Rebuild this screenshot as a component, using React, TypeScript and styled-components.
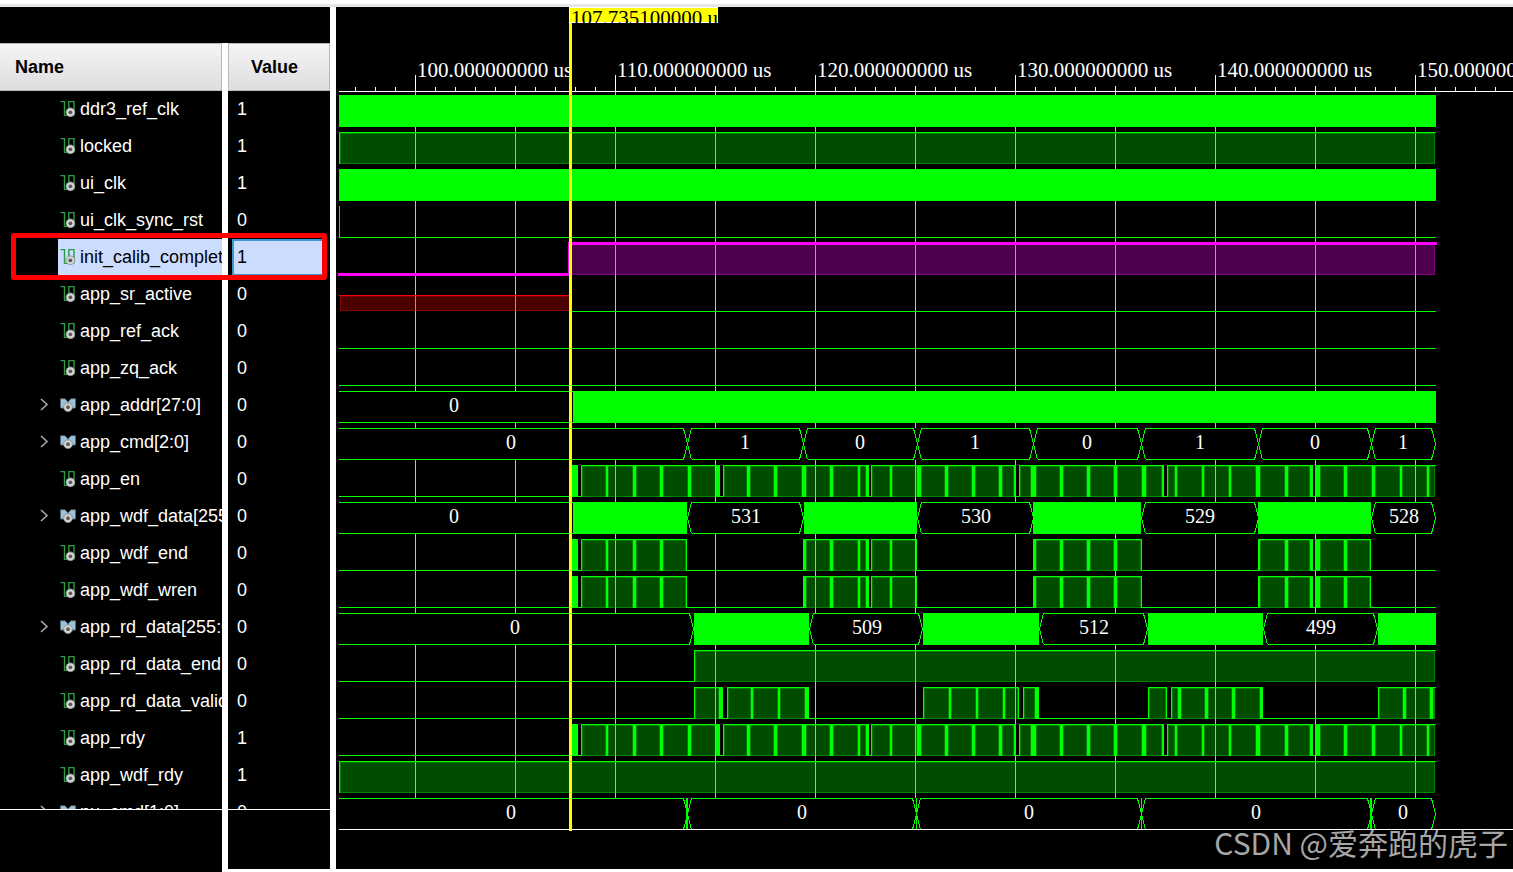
import React from "react";
import styled, { createGlobalStyle } from "styled-components";

const GlobalStyle = createGlobalStyle`
  * { box-sizing: border-box; }
  body { margin: 0; background: #fff; font-family: "Liberation Sans", Arial, sans-serif; }
`;

const GREEN = "#00ff00";
const LEFT = 3;
const END = 1100;

type Span = [number, number];
type Burst = { span: Span; marks: Span[] };
type Segment = { span: Span; label?: string; at?: number; solid?: boolean };
type Wave =
  | { kind: "solid" }
  | { kind: "level"; rise: number; edge?: boolean }
  | { kind: "low"; from?: number; edge?: boolean }
  | { kind: "selected" }
  | { kind: "unknown" }
  | { kind: "bursts"; bursts: Burst[] }
  | { kind: "bus"; segments: Segment[]; dense?: Span[] };

type Signal = { name: string; value: string; bus?: boolean; selected?: boolean; wave: Wave };

const readyBursts: Burst[] = [
  { span: [236, 242], marks: [[236, 242]] },
  { span: [245, 384], marks: [[270, 272], [297, 300], [324, 327], [352, 355], [380, 384]] },
  { span: [387, 533], marks: [[411, 414], [438, 441], [466, 470], [494, 497], [522, 524], [530, 533]] },
  { span: [535, 680], marks: [[554, 556], [581, 585], [609, 612], [636, 639], [663, 666], [678, 680]] },
  { span: [683, 828], marks: [[695, 700], [724, 727], [751, 754], [778, 781], [806, 810], [826, 828]] },
  { span: [831, 977], marks: [[839, 841], [866, 868], [893, 895], [920, 924], [949, 952], [974, 977]] },
  { span: [979, 1100], marks: [[979, 984], [1008, 1011], [1036, 1039], [1064, 1066], [1091, 1093]] },
];

const writeBursts: Burst[] = [
  { span: [236, 242], marks: [[236, 242]] },
  { span: [245, 351], marks: [[270, 272], [297, 300], [324, 327], [350, 351]] },
  { span: [467, 533], marks: [[467, 470], [494, 497], [522, 524], [530, 533]] },
  { span: [535, 581], marks: [[554, 556], [580, 581]] },
  { span: [697, 806], marks: [[697, 700], [724, 727], [751, 754], [778, 781], [805, 806]] },
  { span: [922, 977], marks: [[922, 924], [949, 952], [974, 977]] },
  { span: [979, 1035], marks: [[979, 984], [1008, 1011], [1034, 1035]] },
];

const validBursts: Burst[] = [
  { span: [358, 387], marks: [[383, 387]] },
  { span: [391, 473], marks: [[415, 417], [442, 444], [469, 473]] },
  { span: [587, 683], marks: [[613, 615], [640, 642], [667, 669], [682, 683]] },
  { span: [687, 703], marks: [[699, 703]] },
  { span: [812, 831], marks: [[830, 831]] },
  { span: [835, 927], marks: [[842, 845], [869, 872], [896, 899], [924, 927]] },
  { span: [1042, 1100], marks: [[1067, 1070], [1094, 1097]] },
];

const signals: Signal[] = [
  { name: "ddr3_ref_clk", value: "1", wave: { kind: "solid" } },
  { name: "locked", value: "1", wave: { kind: "level", rise: LEFT } },
  { name: "ui_clk", value: "1", wave: { kind: "solid" } },
  { name: "ui_clk_sync_rst", value: "0", wave: { kind: "low", edge: true } },
  { name: "init_calib_complete", value: "1", selected: true, wave: { kind: "selected" } },
  { name: "app_sr_active", value: "0", wave: { kind: "unknown" } },
  { name: "app_ref_ack", value: "0", wave: { kind: "low" } },
  { name: "app_zq_ack", value: "0", wave: { kind: "low" } },
  {
    name: "app_addr[27:0]", value: "0", bus: true,
    wave: { kind: "bus", segments: [{ span: [LEFT, 237], label: "0", at: 118 }, { span: [237, END], solid: true }] },
  },
  {
    name: "app_cmd[2:0]", value: "0", bus: true,
    wave: {
      kind: "bus",
      segments: [
        { span: [LEFT, 351], label: "0", at: 175 },
        { span: [351, 467], label: "1", at: 409 },
        { span: [467, 581], label: "0", at: 524 },
        { span: [581, 697], label: "1", at: 639 },
        { span: [697, 805], label: "0", at: 751 },
        { span: [805, 922], label: "1", at: 864 },
        { span: [922, 1035], label: "0", at: 979 },
        { span: [1035, 1099], label: "1", at: 1067 },
      ],
    },
  },
  { name: "app_en", value: "0", wave: { kind: "bursts", bursts: readyBursts } },
  {
    name: "app_wdf_data[255:0]", value: "0", bus: true,
    wave: {
      kind: "bus",
      segments: [
        { span: [LEFT, 237], label: "0", at: 118 },
        { span: [237, 351], solid: true },
        { span: [351, 467], label: "531", at: 410 },
        { span: [468, 581], solid: true },
        { span: [581, 697], label: "530", at: 640 },
        { span: [697, 805], solid: true },
        { span: [805, 922], label: "529", at: 864 },
        { span: [922, 1035], solid: true },
        { span: [1035, 1099], label: "528", at: 1068 },
      ],
    },
  },
  { name: "app_wdf_end", value: "0", wave: { kind: "bursts", bursts: writeBursts } },
  { name: "app_wdf_wren", value: "0", wave: { kind: "bursts", bursts: writeBursts } },
  {
    name: "app_rd_data[255:0]", value: "0", bus: true,
    wave: {
      kind: "bus",
      segments: [
        { span: [LEFT, 357], label: "0", at: 179 },
        { span: [358, 473], solid: true },
        { span: [473, 586], label: "509", at: 531 },
        { span: [587, 703], solid: true },
        { span: [703, 811], label: "512", at: 758 },
        { span: [812, 927], solid: true },
        { span: [927, 1041], label: "499", at: 985 },
        { span: [1042, END], solid: true },
      ],
    },
  },
  { name: "app_rd_data_end", value: "0", wave: { kind: "level", rise: 358 } },
  { name: "app_rd_data_valid", value: "0", wave: { kind: "bursts", bursts: validBursts } },
  { name: "app_rdy", value: "1", wave: { kind: "bursts", bursts: readyBursts } },
  { name: "app_wdf_rdy", value: "1", wave: { kind: "level", rise: LEFT } },
  {
    name: "pu_cmd[1:0]", value: "0", bus: true,
    wave: {
      kind: "bus",
      dense: [[350, 352], [580, 581], [805, 806], [1034, 1036]],
      segments: [
        { span: [LEFT, 351], label: "0", at: 175 },
        { span: [351, 580], label: "0", at: 466 },
        { span: [580, 805], label: "0", at: 693 },
        { span: [805, 1035], label: "0", at: 920 },
        { span: [1035, 1099], label: "0", at: 1067 },
      ],
    },
  },
];

const Page = styled.div`
  position: relative;
  display: flex;
  flex-direction: column;
  height: 100vh;
  overflow: hidden;
  background: #fff;
`;

const TopEdge = styled.div`
  flex: none;
  height: 7px;
  border-bottom: 3px solid #e6e6e6;
`;

const Workspace = styled.main`
  flex: 1;
  min-height: 0;
  display: flex;
  gap: 6px;
`;

const SignalPane = styled.section`
  position: relative;
  flex: none;
  width: 330px;
  display: flex;
  flex-direction: column;
  padding-top: 36px;
  background: #000;
`;

const SignalViewport = styled.div`
  flex: 1;
  min-height: 0;
  overflow: hidden;
`;

const SignalTable = styled.table`
  width: 100%;
  table-layout: fixed;
  border-collapse: separate;
  border-spacing: 0;
  color: #fff;
  font-size: 18px;
  line-height: 20px;
`;

const HeadCell = styled.th<{ $value?: boolean }>`
  height: 48px;
  padding: 0;
  width: ${(p) => (p.$value ? "108px" : "auto")};
  border-left: ${(p) => (p.$value ? "6px solid #fff" : "0")};
  text-align: left;
  color: #000;
`;

const HeadLabel = styled.div<{ $value?: boolean }>`
  height: 48px;
  display: flex;
  align-items: center;
  padding-left: ${(p) => (p.$value ? "22px" : "15px")};
  border: 1px solid #b9b9bb;
  border-left-width: ${(p) => (p.$value ? "1px" : "0")};
  background: linear-gradient(#f5f5f5, #dedee0);
`;

const Cell = styled.td<{ $value?: boolean }>`
  height: 37px;
  padding: 0;
  border-left: ${(p) => (p.$value ? "6px solid #fff" : "0")};
`;

const NameLine = styled.div`
  display: flex;
  height: 37px;
  overflow: hidden;
`;

const ToggleSlot = styled.div`
  flex: none;
  width: 58px;
  display: flex;
  align-items: center;
  justify-content: flex-end;
  padding: 0 9px 2px 0;
`;

const Toggle = styled.button`
  display: flex;
  padding: 0;
  border: 0;
  background: none;
  color: #a8a8a8;
`;

const NameLabel = styled.div<{ $selected?: boolean }>`
  flex: 1;
  min-width: 0;
  display: flex;
  align-items: center;
  gap: 4px;
  padding: 0 0 1px 2px;
  overflow: hidden;
  white-space: nowrap;
  color: ${(p) => (p.$selected ? "#000" : "#fff")};
  background: ${(p) => (p.$selected ? "#ccdcff" : "transparent")};
  svg { flex: none; }
`;

const ValueBox = styled.div<{ $selected?: boolean }>`
  display: flex;
  align-items: center;
  height: 37px;
  margin: 0 4px;
  padding: 0 3px 1px;
  border: 2px solid ${(p) => (p.$selected ? "#3c96d4" : "transparent")};
  color: ${(p) => (p.$selected ? "#000" : "#fff")};
  background: ${(p) => (p.$selected ? "#ccdcff" : "transparent")};
`;

const PaneFooter = styled.div`
  flex: none;
  display: flex;
  gap: 6px;
  height: 63px;
  border-top: 1px solid #fff;
  background: #fff;
`;

const FooterName = styled.div`
  flex: 1;
  background: #000;
`;

const FooterValue = styled.div`
  width: 102px;
  margin-bottom: 3px;
  background: #000;
`;

const Highlight = styled.div`
  position: absolute;
  left: 11px;
  right: 3px;
  top: 226px;
  height: 47px;
  border: 5px solid #ff0000;
  border-radius: 3px;
`;

const WavePane = styled.section`
  flex: 1;
  min-width: 0;
  margin-bottom: 3px;
  overflow: hidden;
  background: #000;
`;

const Chart = styled.svg`
  display: block;
  width: 100%;
  height: 100%;
  shape-rendering: crispEdges;
`;

const ChartText = styled.text<{ $time?: boolean }>`
  font-family: "Liberation Serif", "Times New Roman", serif;
  font-size: ${(p) => (p.$time ? "21px" : "20px")};
  white-space: pre;
`;

const Watermark = styled.div`
  position: absolute;
  right: 5px;
  bottom: 8px;
  color: #a6a6a6;
  font-family: "Noto Sans CJK SC", sans-serif;
  font-size: 30px;
  font-weight: 400;
  line-height: 44px;
  white-space: nowrap;
`;

const Knob = ({ cx, cy }: { cx: number; cy: number }) => (
  <>
    <circle cx={cx} cy={cy} r="4.4" fill="#d4d4d4" stroke="#8a8a8a" strokeWidth="0.8" />
    <circle cx={cx} cy={cy} r="1.9" fill="#5a5a5a" />
  </>
);

const WireIcon = () => (
  <svg width="16" height="18" viewBox="0 0 16 18" fill="none" aria-hidden="true">
    <path d="M0.5 1.6H4.5V15.4H8.8V1.6H14V15.4" stroke="#2f9a45" strokeWidth="1.4" />
    <Knob cx={10.4} cy={12.3} />
  </svg>
);

const BusIcon = () => (
  <svg width="16" height="18" viewBox="0 0 16 18" aria-hidden="true">
    <path d="M0.5 2.8H5L8 6L11 2.8H15.5V12H0.5Z" fill="#97c4dc" stroke="#5d6a72" strokeWidth="0.8" />
    <path d="M4.8 12.5V8.5L8 6L11.2 8.5V12.5Z" fill="#46525a" />
    <Knob cx={8} cy={11.2} />
  </svg>
);

const Chevron = () => (
  <svg width="9" height="13" viewBox="0 0 9 13" fill="none" aria-hidden="true">
    <path d="M1 1L7 6.5L1 12" stroke="currentColor" strokeWidth="1.6" />
  </svg>
);

const High = ({ y, from, to, color = GREEN }: { y: number; from: number; to: number; color?: string }) => (
  <g>
    <rect x={from} y={y + 1} width={to - from} height={31} fill={color} fillOpacity={0.3} />
    <path
      d={`M${from + 1.5} ${y + 32}V${y + 1.5}H${to - 0.5}V${y + 31.5}H${from}`}
      fill="none"
      stroke={color}
      strokeOpacity={0.3}
    />
  </g>
);

const BurstShape = ({ y, burst }: { y: number; burst: Burst }) => {
  const [from, to] = burst.span;
  return (
    <g fill={GREEN}>
      <High y={y} from={from} to={to === END ? END - 1 : to} />
      {burst.marks.map(([a, b]) => (
        <g key={a}>
          <rect x={Math.max(a - 1, from)} y={y} width={Math.min(b + 1, to) - Math.max(a - 1, from)} height={32} fillOpacity={0.3} />
          <rect x={a} y={y} width={b - a} height={32} />
        </g>
      ))}
      <rect x={from} y={y} width={1} height={32} />
      <rect x={from} y={y} width={to - from} height={1} />
    </g>
  );
};

const BusSegment = ({ y, segment }: { y: number; segment: Segment }) => {
  const [a, b] = segment.span;
  if (segment.solid) return <rect x={a} y={y} width={b - a} height={32} fill={GREEN} />;
  const top = y + 0.5;
  const mid = y + 16;
  const bottom = y + 31.5;
  const head = a === LEFT ? `M${a} ${top}` : `M${a + 4.5} ${bottom}L${a + 0.5} ${mid}L${a + 4.5} ${top}`;
  const taper = b === 237 ? 0 : 4;
  return (
    <g>
      <rect x={a} y={y} width={b - a} height={32} fill="#000" />
      <path
        d={`${head}H${b - taper + 0.5}L${b + 0.5} ${mid}L${b - taper + 0.5} ${bottom}H${a === LEFT ? a : a + 4.5}`}
        fill="none"
        stroke={GREEN}
      />
      <ChartText x={segment.at} y={y + 21} fill="#fff" textAnchor="middle">
        {segment.label}
      </ChartText>
    </g>
  );
};

const WaveRow = ({ wave, y }: { wave: Wave; y: number }) => {
  switch (wave.kind) {
    case "solid":
      return <rect x={LEFT} y={y} width={END - LEFT} height={32} fill={GREEN} />;
    case "level":
      return (
        <g fill={GREEN}>
          {wave.rise > LEFT && <rect x={LEFT} y={y + 31} width={wave.rise - LEFT} height={1} />}
          <High y={y} from={wave.rise} to={END - 1} />
          <rect x={wave.rise} y={y} width={1} height={32} />
          <rect x={wave.rise} y={y} width={END - wave.rise} height={1} />
        </g>
      );
    case "low":
      return (
        <g fill={GREEN}>
          <rect x={LEFT} y={y + 31} width={END - LEFT} height={1} />
          {wave.edge && <rect x={LEFT} y={y} width={1} height={32} />}
        </g>
      );
    case "selected":
      return (
        <g fill="#ff00ff">
          <High y={y} from={233} to={END - 1} color="#ff00ff" />
          <rect x={2} y={y + 30} width={231} height={3} />
          <rect x={232} y={y - 1} width={2} height={34} />
          <rect x={232} y={y - 1} width={END - 231} height={3} />
        </g>
      );
    case "unknown":
      return (
        <g>
          <rect x={4} y={y + 16} width={230} height={15} fill="#ff0000" fillOpacity={0.3} />
          <rect x={4.5} y={y + 16.5} width={230} height={14} fill="none" stroke="#ff0000" strokeOpacity={0.3} />
          <rect x={LEFT} y={y + 15} width={232} height={1} fill="#ff0000" />
          <rect x={235} y={y + 31} width={END - 235} height={1} fill={GREEN} />
        </g>
      );
    case "bursts": {
      const gaps: Span[] = wave.bursts.map((b, i) => [i ? wave.bursts[i - 1].span[1] : LEFT, b.span[0]]);
      gaps.push([wave.bursts[wave.bursts.length - 1].span[1], END]);
      return (
        <g>
          {gaps.map(([a, b]) => (
            <rect key={a} x={a} y={y + 31} width={b - a} height={1} fill={GREEN} />
          ))}
          {wave.bursts.map((b) => (
            <BurstShape key={b.span[0]} y={y} burst={b} />
          ))}
        </g>
      );
    }
    case "bus":
      return (
        <g>
          {wave.segments.map((s) => (
            <BusSegment key={s.span[0]} y={y} segment={s} />
          ))}
          {wave.dense?.map(([a, b]) => (
            <rect key={a} x={a} y={y} width={b - a} height={32} fill={GREEN} />
          ))}
        </g>
      );
  }
};

const range = (n: number) => Array.from({ length: n }, (_, i) => i);

const WaveChart = () => (
  <Chart role="img" aria-label="Waveforms">
    {range(11).map((i) => (
      <rect key={i} x={79 + i * 100} y={85} width={1} height={737} fill="#bebebe" />
    ))}
    <g fill="#fff">
      {range(60).map((i) => {
        const h = i % 10 === 3 ? 16 : i % 5 === 3 ? 5 : 4;
        return <rect key={i} x={19 + i * 20} y={84 - h} width={1} height={h} />;
      })}
      <rect x={LEFT} y={84} width="100%" height={1} />
      {range(6).map((i) => (
        <ChartText key={i} x={81 + i * 200} y={70} $time>
          {`${100 + i * 10}.000000000 us`}
        </ChartText>
      ))}
    </g>
    {signals.map((s, i) => (
      <WaveRow key={s.name} wave={s.wave} y={88 + i * 37} />
    ))}
    <rect x={LEFT} y={822} width="100%" height={1} fill="#fff" />
    <rect x={233} y={0} width={3} height={824} fill="#ffff00" />
    <svg x={233} y={0} width={149} height={16}>
      <rect width={149} height={16} fill="#fff" />
      <rect x={1} y={1} width={147} height={14} fill="#ffff00" />
      <ChartText x={2} y={18} fill="#000" $time>
        107.735100000 us
      </ChartText>
    </svg>
  </Chart>
);

export default function App() {
  return (
    <Page>
      <GlobalStyle />
      <TopEdge />
      <Workspace>
        <SignalPane>
          <SignalViewport>
            <SignalTable>
              <thead>
                <tr>
                  <HeadCell scope="col">
                    <HeadLabel>Name</HeadLabel>
                  </HeadCell>
                  <HeadCell scope="col" $value>
                    <HeadLabel $value>Value</HeadLabel>
                  </HeadCell>
                </tr>
              </thead>
              <tbody>
                {signals.map((s) => (
                  <tr key={s.name}>
                    <Cell>
                      <NameLine>
                        <ToggleSlot>
                          {s.bus && (
                            <Toggle type="button" aria-label={`Expand ${s.name}`}>
                              <Chevron />
                            </Toggle>
                          )}
                        </ToggleSlot>
                        <NameLabel $selected={s.selected}>
                          {s.bus ? <BusIcon /> : <WireIcon />}
                          {s.name}
                        </NameLabel>
                      </NameLine>
                    </Cell>
                    <Cell $value>
                      <ValueBox $selected={s.selected}>{s.value}</ValueBox>
                    </Cell>
                  </tr>
                ))}
              </tbody>
            </SignalTable>
          </SignalViewport>
          <PaneFooter>
            <FooterName />
            <FooterValue />
          </PaneFooter>
          <Highlight />
        </SignalPane>
        <WavePane>
          <WaveChart />
        </WavePane>
      </Workspace>
      <Watermark>CSDN @爱奔跑的虎子</Watermark>
    </Page>
  );
}
